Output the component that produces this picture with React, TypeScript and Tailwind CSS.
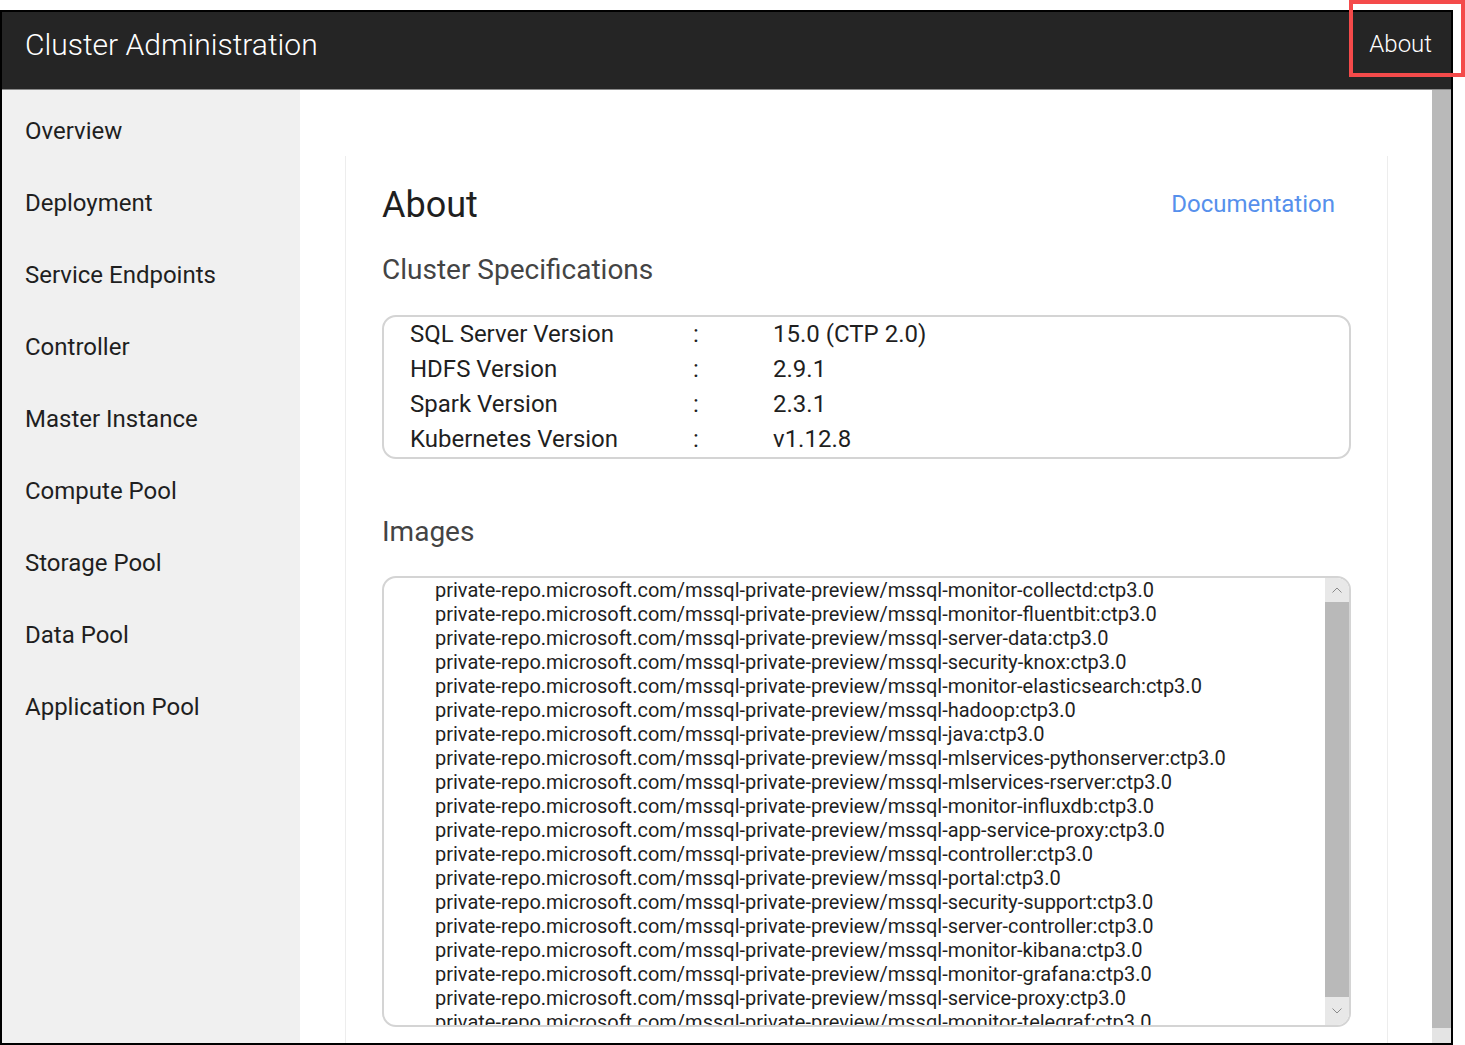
const NAV = [
  'Overview',
  'Deployment',
  'Service Endpoints',
  'Controller',
  'Master Instance',
  'Compute Pool',
  'Storage Pool',
  'Data Pool',
  'Application Pool',
]

const SPECS: [string, string][] = [
  ['SQL Server Version', '15.0 (CTP 2.0)'],
  ['HDFS Version', '2.9.1'],
  ['Spark Version', '2.3.1'],
  ['Kubernetes Version', 'v1.12.8'],
]

const IMAGES = [
  'mssql-monitor-collectd',
  'mssql-monitor-fluentbit',
  'mssql-server-data',
  'mssql-security-knox',
  'mssql-monitor-elasticsearch',
  'mssql-hadoop',
  'mssql-java',
  'mssql-mlservices-pythonserver',
  'mssql-mlservices-rserver',
  'mssql-monitor-influxdb',
  'mssql-app-service-proxy',
  'mssql-controller',
  'mssql-portal',
  'mssql-security-support',
  'mssql-server-controller',
  'mssql-monitor-kibana',
  'mssql-monitor-grafana',
  'mssql-service-proxy',
  'mssql-monitor-telegraf',
]

function Chevron({ up }: { up?: boolean }) {
  return (
    <svg width="10" height="6" viewBox="0 0 10 6" fill="none" stroke="#8a8a8a" strokeWidth="1">
      {up ? <polyline points="0.5,5.5 5,1 9.5,5.5" /> : <polyline points="0.5,0.5 5,5 9.5,0.5" />}
    </svg>
  )
}

export default function App() {
  return (
    <div className="relative h-[1045px] w-[1465px] overflow-hidden bg-white pt-[10px] font-['Roboto',sans-serif] text-[#1f1f1f]">
      <div className="flex h-[1035px] w-[1453px] flex-col border-2 border-black">
        {/* Header */}
        <header className="flex h-[78px] shrink-0 items-center justify-between border-b border-[#8a8a8a] bg-[#252525] pb-[11px] pl-[23px] pr-[19px]">
          <span className="text-[30px] font-light leading-[34px] text-white">Cluster Administration</span>
          <span className="mb-[2px] text-[24px] font-light leading-[30px] text-white">About</span>
        </header>

        <div className="flex min-h-0 flex-1">
          {/* Sidebar */}
          <nav className="w-[298px] shrink-0 bg-[#f0f0f0] pl-[23px] pt-[5px]">
            {NAV.map((item) => (
              <div key={item} className="flex h-[72px] items-center text-[24px] leading-[28px]">
                {item}
              </div>
            ))}
          </nav>

          {/* Main */}
          <main className="min-w-0 flex-1 overflow-hidden pl-[45px] pt-[66px]">
            <div className="h-full w-[1043px] border-x border-[#ededed] px-[36px] pt-[27px]">
              <div className="flex items-center justify-between">
                <h1 className="text-[36px] leading-[44px] text-[#1f1f1f]">About</h1>
                <a className="mb-[3px] mr-[16px] text-[24px] leading-[28px] text-[#5690ec]">Documentation</a>
              </div>

              <h2 className="mt-[27px] text-[28px] leading-[32px] text-[#444]">Cluster Specifications</h2>
              <div className="mt-[29px] rounded-[14px] border-2 border-[#d4d4d4] pl-[26px]">
                {SPECS.map(([k, v]) => (
                  <div key={k} className="grid grid-cols-[283px_80px_1fr] text-[24px] leading-[35px]">
                    <span>{k}</span>
                    <span>:</span>
                    <span>{v}</span>
                  </div>
                ))}
              </div>

              <h2 className="mt-[57px] text-[28px] leading-[32px] text-[#444]">Images</h2>
              <div className="mt-[28px] flex h-[451px] overflow-hidden rounded-[14px] border-2 border-[#d4d4d4]">
                <ul className="min-w-0 flex-1 overflow-hidden pl-[51px] text-[20px] leading-[24px]">
                  {IMAGES.map((img) => (
                    <li key={img} className="whitespace-nowrap">
                      private-repo.microsoft.com/mssql-private-preview/{img}:ctp3.0
                    </li>
                  ))}
                </ul>
                <div className="flex w-[24px] shrink-0 flex-col">
                  <div className="flex h-[24px] items-center justify-center bg-[#e8e8e8]">
                    <Chevron up />
                  </div>
                  <div className="flex-1 bg-[#b9b9b9]" />
                  <div className="flex h-[28px] items-center justify-center bg-[#e8e8e8]">
                    <Chevron />
                  </div>
                </div>
              </div>
            </div>
          </main>

          {/* Page scrollbar */}
          <div className="flex w-[19px] shrink-0 flex-col">
            <div className="flex-1 bg-[#b9b9b9]" />
            <div className="h-[15px] bg-[#e4e4e4]" />
          </div>
        </div>
      </div>

      {/* Highlight box */}
      <div className="absolute left-[1349px] top-0 h-[77px] w-[116px] border-[4px] border-[#f44a4a]" />
    </div>
  )
}
